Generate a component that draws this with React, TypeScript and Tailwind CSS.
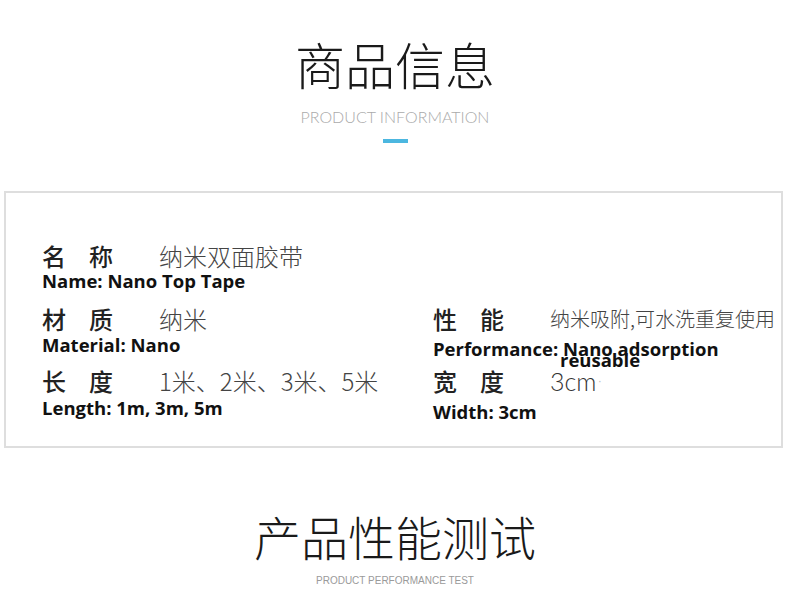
import React from "react";

const cjk = '"Noto Sans CJK SC", "Noto Sans", sans-serif';
const en = '"Open Sans", "Noto Sans", sans-serif';
const thin = 'Lato, "Liberation Sans", sans-serif';

function Label({ a, b }: { a: string; b: string }) {
  return (
    <div className="flex w-[117px] shrink-0 gap-[23px] text-[24px] font-medium leading-[30px] text-[#222]" style={{ fontFamily: cjk }}>
      <span>{a}</span>
      <span>{b}</span>
    </div>
  );
}

export default function App() {
  return (
    <div className="w-[790px] h-[612px] bg-white overflow-hidden">
      <div className="flex flex-col items-center pt-[38px]">
        <div className="text-[50px] leading-[50px] font-light text-[#1a1a1a]" style={{ fontFamily: cjk }}>
          商品信息
        </div>
        <div className="mt-[21px] text-[16px] leading-[16px] font-light text-[#aaaaaa]" style={{ fontFamily: thin }}>
          PRODUCT INFORMATION
        </div>
        <div className="mt-[14px] h-[4px] w-[25px] bg-[#4cb7e0]" />
      </div>

      <div className="ml-[4px] mt-[48px] w-[779px] h-[257px] border-2 border-[#dedede] pl-[36px] pt-[48px]">
        <div className="grid grid-cols-[391px_1fr]">
          {/* row 1 */}
          <div className="h-[63px]">
            <div className="flex items-center">
              <Label a="名" b="称" />
              <span className="text-[24px] font-light leading-[30px] text-[#444]" style={{ fontFamily: cjk }}>纳米双面胶带</span>
            </div>
            <div className="text-[18.5px] font-bold leading-[20px] text-[#111]" style={{ fontFamily: en }}>Name: Nano Top Tape</div>
          </div>
          <div className="h-[63px]" />
          {/* row 2 */}
          <div className="h-[62px]">
            <div className="flex items-center">
              <Label a="材" b="质" />
              <span className="text-[24px] font-light leading-[30px] text-[#444]" style={{ fontFamily: cjk }}>纳米</span>
            </div>
            <div className="mt-[1px] text-[18.5px] font-bold leading-[20px] text-[#111]" style={{ fontFamily: en }}>Material: Nano</div>
          </div>
          <div className="h-[62px]">
            <div className="flex items-center">
              <Label a="性" b="能" />
              <span className="text-[20px] font-light leading-[30px] text-[#444]" style={{ fontFamily: cjk }}>纳米吸附,可水洗重复使用</span>
            </div>
            <div className="relative mt-[5px] text-[18.5px] font-bold leading-[20px] text-[#111]" style={{ fontFamily: en }}>
              Performance: Nano adsorption
              <div className="absolute left-[127px] top-[13px] leading-[16px]">reusable</div>
            </div>
          </div>
          {/* row 3 */}
          <div>
            <div className="flex items-center">
              <Label a="长" b="度" />
              <span className="text-[24px] font-light leading-[30px] text-[#444]" style={{ fontFamily: cjk }}>1米、2米、3米、5米</span>
            </div>
            <div className="mt-[2px] text-[18.5px] font-bold leading-[20px] text-[#111]" style={{ fontFamily: en }}>Length: 1m, 3m, 5m</div>
          </div>
          <div>
            <div className="flex items-center">
              <Label a="宽" b="度" />
              <span className="text-[25px] font-light leading-[30px] text-[#333]" style={{ fontFamily: thin }}>3cm</span>
              <span className="ml-[2px] text-[10px] text-[#bbb]">·</span>
            </div>
            <div className="mt-[6px] text-[18.5px] font-bold leading-[20px] text-[#111]" style={{ fontFamily: en }}>Width: 3cm</div>
          </div>
        </div>
      </div>

      <div className="flex flex-col items-center pt-[64px]">
        <div className="text-[47px] leading-[48px] font-light text-[#1a1a1a]" style={{ fontFamily: cjk }}>
          产品性能测试
        </div>
        <div className="mt-[16px] text-[10px] leading-[10px] text-[#9a9a9a]" style={{ fontFamily: '"Liberation Sans", Arial, sans-serif' }}>
          PRODUCT PERFORMANCE TEST
        </div>
      </div>
    </div>
  );
}
